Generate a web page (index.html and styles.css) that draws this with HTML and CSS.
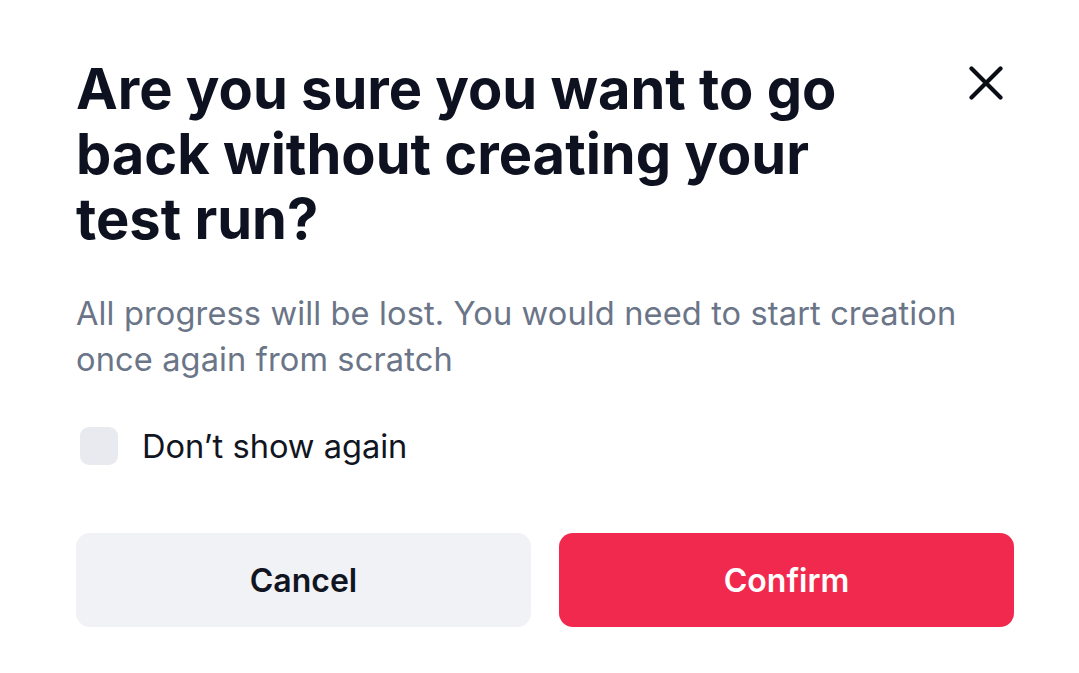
FILE: index.html
```html
<!DOCTYPE html>
<html lang="en">
<head>
<meta charset="utf-8">
<title>Confirm</title>
<link rel="stylesheet" href="styles.css">
</head>
<body>
<div class="dialog">
  <div class="header">
    <h1 class="title">Are you sure you want to go back without creating your test run?</h1>
    <button class="close" aria-label="Close">
      <svg width="34" height="34" viewBox="0 0 34 34"><path d="M2.5 2.5L31.5 31.5M31.5 2.5L2.5 31.5" stroke="#0b0d14" stroke-width="4.2" stroke-linecap="round" fill="none"/></svg>
    </button>
  </div>
  <p class="desc">All progress will be lost. You would need to start creation once again from scratch</p>
  <label class="check">
    <span class="box"></span>
    <span class="check-label">Don’t show again</span>
  </label>
  <div class="actions">
    <button class="btn btn-cancel">Cancel</button>
    <button class="btn btn-confirm">Confirm</button>
  </div>
</div>
</body>
</html>
```
FILE: styles.css
```css
* { box-sizing: border-box; }
html, body { margin: 0; background: #ffffff; }
body { font-family: Inter, "Noto Sans", sans-serif; }
.dialog {
  width: 1079px;
  height: 673px;
  padding: 57px 65px 0 76px;
  display: flex;
  flex-direction: column;
}
.header {
  display: flex;
  justify-content: space-between;
  align-items: flex-start;
}
.title {
  margin: 0;
  max-width: 820px;
  font-size: 56px;
  line-height: 65px;
  font-weight: 700;
  color: #0e1220;
}
.close {
  border: 0;
  background: none;
  padding: 0;
  margin: 9px 11px 0 0;
  width: 34px;
  height: 34px;
  display: flex;
  cursor: pointer;
}
.desc {
  margin: 38px 0 0 0;
  font-size: 32.6px;
  line-height: 46px;
  letter-spacing: 0.12px;
  color: #6b7588;
  max-width: 910px;
}
.check {
  margin-top: 44px;
  display: flex;
  align-items: center;
  gap: 24px;
  padding-left: 4px;
}
.box {
  width: 38px;
  height: 38px;
  border-radius: 9px;
  background: #e8eaef;
}
.check-label {
  font-size: 32.6px;
  line-height: 40px;
  color: #111522;
}
.actions {
  margin-top: 67px;
  display: flex;
  gap: 28px;
}
.btn {
  flex: 1;
  height: 94px;
  border: 0;
  border-radius: 14px;
  font-family: Inter, "Noto Sans", sans-serif;
  font-size: 32px;
  font-weight: 600;
  cursor: pointer;
}
.btn-cancel { background: #f1f2f6; color: #111522; }
.btn-confirm { background: #f2294e; color: #ffffff; }
```
